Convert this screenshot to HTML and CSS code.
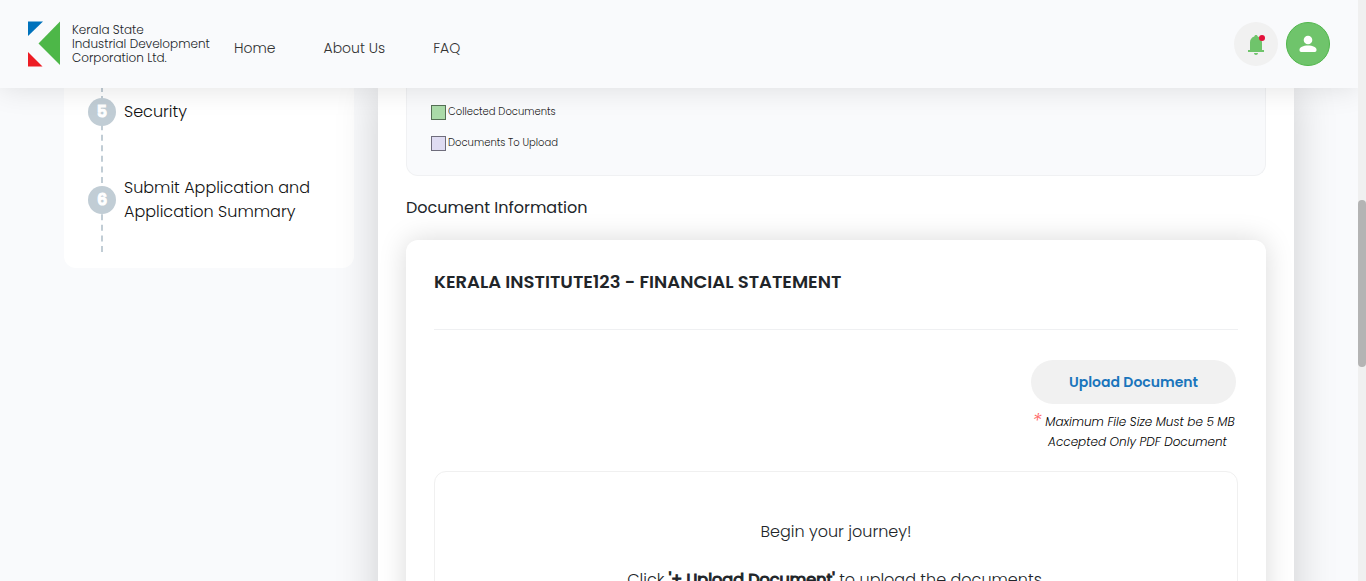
FILE: index.html
```html
<!DOCTYPE html>
<html lang="en">
<head>
<meta charset="utf-8">
<title>KSIDC - Document Information</title>
<link rel="stylesheet" href="styles.css">
</head>
<body>
<div class="app">
  <div class="page">
    <header class="topbar">
      <a class="brand" href="#">
        <svg class="brand-mark" viewBox="0 0 32 46" aria-hidden="true">
          <path fill="#0072bc" d="M0 .5h15L0 15z"/>
          <path fill="#4db748" d="M32 .5V44L10.500 22.500z"/>
          <path fill="#ed1c24" d="M0 31v14.500h14.500z"/>
        </svg>
        <span class="brand-name">Kerala State<br>Industrial Development<br>Corporation Ltd.</span>
      </a>
      <nav class="nav">
        <a href="#">Home</a>
        <a href="#">About Us</a>
        <a href="#">FAQ</a>
      </nav>
      <div class="actions">
        <button class="round" type="button" aria-label="Notifications">
          <svg width="20" height="22" viewBox="0 0 20 22" aria-hidden="true">
            <path fill="#6fc46b" d="M10 2c1 0 1.600.600 1.700 1.500C14.300 4.300 16 6.600 16 9.300V17h2v2H2v-2h2V9.300c0-2.700 1.700-5 4.300-5.800C8.400 2.600 9 2 10 2zM8 20h4c0 1.200-.900 2-2 2s-2-.800-2-2z"/>
            <circle cx="16" cy="5" r="3" fill="#e3103a"/>
          </svg>
        </button>
        <button class="round round-user" type="button" aria-label="Account">
          <svg width="18" height="18" viewBox="0 0 18 18" aria-hidden="true">
            <circle cx="9" cy="5" r="4.300" fill="#fff"/>
            <path fill="#fff" d="M9 10.500c4.800 0 8.500 1.700 8.500 4V15c0 1.200-.6 2-1.700 2H2.200C1.100 17 .5 16.200.5 15v-.5c0-2.300 3.700-4 8.500-4z"/>
          </svg>
        </button>
      </div>
    </header>
    <main class="content">
      <aside class="steps-card">
        <div class="steps-tail"></div>
        <ol class="steps">
          <li class="step"><span class="step-num">5</span><span class="step-name">Security</span></li>
          <li class="step step-last"><span class="step-num">6</span><span class="step-name">Submit Application and Application Summary</span></li>
        </ol>
      </aside>
      <section class="panel">
        <ul class="legend">
          <li><span class="swatch swatch-done"></span>Collected Documents</li>
          <li><span class="swatch swatch-todo"></span>Documents To Upload</li>
        </ul>
        <h2 class="section-title">Document Information</h2>
        <article class="doc-card">
          <h3 class="doc-title">KERALA INSTITUTE123 - FINANCIAL STATEMENT</h3>
          <div class="upload">
            <button class="upload-btn" type="button">Upload Document</button>
            <p class="note"><span class="star">*</span> Maximum File Size Must be 5 MB</p>
            <p class="note note-second">Accepted Only PDF Document</p>
          </div>
          <div class="empty">
            <p>Begin your journey!</p>
            <p>Click <b>'+ Upload Document'</b> to upload the documents.</p>
          </div>
        </article>
      </section>
    </main>
  </div>
  <div class="scroll-track"><div class="scroll-thumb"></div></div>
</div>
</body>
</html>
```
FILE: styles.css
```css
* { box-sizing: border-box; }
body {
  margin: 0;
  background: #f9fafc;
  color: #212529;
  font: 400 16px/24px Poppins, Inter, "Open Sans", sans-serif;
}
ol, ul, p, h2, h3 { margin: 0; padding: 0; list-style: none; }
a { color: inherit; text-decoration: none; }
button { border: 0; font: inherit; cursor: pointer; }

.app { display: flex; height: 100vh; overflow: hidden; }
.page { flex: 1; display: flex; flex-direction: column; min-width: 0; overflow: hidden; }

.topbar {
  position: relative;
  z-index: 1;
  flex: none;
  display: flex;
  align-items: center;
  padding: 21px 28px;
  background: #f9fafc;
  box-shadow: 0 0 28px rgba(0, 0, 0, .12);
}
.brand { display: flex; align-items: center; gap: 12px; }
.brand-mark { width: 32px; height: 46px; }
.brand-name { width: 138px; white-space: nowrap; font-size: 12px; line-height: 14px; font-weight: 300; }
.nav { display: flex; gap: 48px; margin-left: 24px; padding-top: 8px; font-size: 14px; color: #333; font-weight: 300; }
.actions { display: flex; gap: 8px; margin-left: auto; }
.round {
  display: grid;
  place-items: center;
  width: 44px;
  height: 44px;
  padding: 0;
  border-radius: 50%;
  background: #f1f1f1;
}
.round-user { background: #6fc46b; border: 1px solid #50b64b; }

.content { flex: 1; display: flex; align-items: flex-start; gap: 24px; padding: 0 64px; min-height: 0; }

.steps-card { flex: none; width: 290px; padding: 0 24px 44px; background: #fff; border-radius: 0 0 12px 12px; }
.steps-tail {
  width: 2px;
  height: 10px;
  margin-left: 13px;
  background: linear-gradient(#c1cdd5 0 4px, transparent 4px 8px, #c1cdd5 8px);
}
.steps { display: flex; flex-direction: column; gap: 50px; }
.step { position: relative; display: flex; align-items: center; gap: 8px; }
.step::before {
  content: "";
  position: absolute;
  left: 13px;
  top: 5px;
  height: 80px;
  border-left: 2px dashed #c1cdd5;
}
.step-last::before { top: 17px; height: 59px; }
.step-num {
  position: relative;
  flex: none;
  width: 28px;
  height: 28px;
  border-radius: 50%;
  background: #c1cdd5;
  color: #fff;
  font-weight: 600;
  -webkit-text-stroke: 1px;
  line-height: 28px;
  text-align: center;
}
.step-name { font-weight: 300; color: #111; }

.panel {
  flex: 1;
  min-width: 0;
  padding: 0 28px 28px;
  background: #fff;
  box-shadow: 0 0 40px rgba(0, 0, 0, .18);
}
.legend {
  display: flex;
  flex-direction: column;
  gap: 15px;
  padding: 16px 24px 24px;
  background: #f9fafc;
  border: 1px solid #f0f1f3;
  border-top: 0;
  border-radius: 0 0 12px 12px;
  color: #222;
  font-size: 10px;
  line-height: 16px;
  font-weight: 300;
}
.legend li { display: flex; align-items: center; gap: 2px; }
.swatch { width: 15px; height: 15px; border: 1px solid; }
.swatch-done { background: #abdba9; border-color: #567055; }
.swatch-todo { background: #dfdcf2; border-color: #6f6d7c; }
.section-title { margin: 20px 0; font-size: 16px; line-height: 24px; font-weight: 400; }

.doc-card {
  padding: 28px;
  background: #fff;
  border-radius: 12px;
  box-shadow: 0 0 28px rgba(0, 0, 0, .15);
}
.doc-title { padding-bottom: 33px; border-bottom: 1px solid #eff0f2; font-size: 18px; line-height: 28px; font-weight: 600; }
.upload { width: fit-content; margin: 30px 2px 19px auto; text-align: center; }
.upload-btn {
  display: block;
  width: 205px;
  height: 44px;
  margin-bottom: 8px;
  border-radius: 22px;
  background: #f1f1f1;
  color: #1a75bc;
  font-size: 14px;
  font-weight: 600;
}
.note { font-size: 12px; line-height: 20px; font-style: italic; font-weight: 300; color: #000; }
.note-second { padding-left: 8px; }
.star { color: #f66; font-size: 20px; line-height: 1px; vertical-align: -2px; }
.empty {
  display: flex;
  flex-direction: column;
  gap: 24px;
  padding: 48px 24px;
  border: 1px solid #f0f0f0;
  border-radius: 12px;
  text-align: center;
  font-weight: 300;
}
.empty b { font-weight: 400; -webkit-text-stroke: 1px; }

.scroll-track { flex: none; width: 8px; background: #f0f0f0; padding-top: 200px; }
.scroll-thumb { height: 167px; border-radius: 4px; background: #b4b4b4; }
```
